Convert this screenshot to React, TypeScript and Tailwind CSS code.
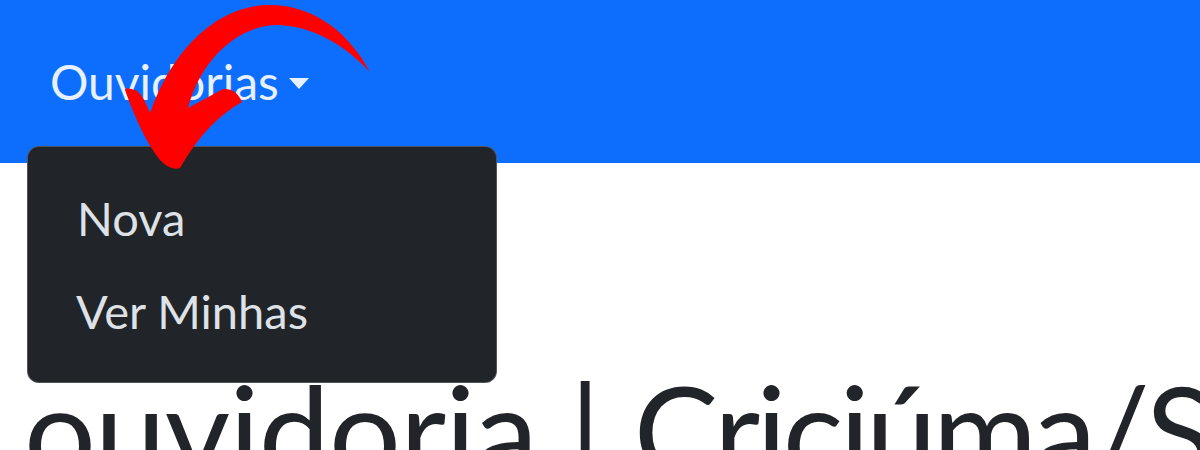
import React from "react";

export default function App() {
  return (
    <div className="relative w-[1200px] h-[450px] overflow-hidden bg-white" style={{ fontFamily: "Lato, 'Open Sans', sans-serif" }}>
      <nav className="h-[163px] bg-[#0d6efd] flex items-start">
        <div className="pl-[50px] pt-[46px] flex items-center gap-[10px]">
          <span className="text-[48px] leading-[72px] text-white/90">Ouvidorias</span>
          <span className="w-0 h-0 border-l-[10px] border-r-[10px] border-t-[11px] border-l-transparent border-r-transparent border-t-white/90 mt-[2px]" />
        </div>
      </nav>
      <h1 className="mt-[190px] pl-[24px] text-[127px] leading-[1.2] text-[#212529] whitespace-nowrap">
        <span className="tracking-[-1px]">ouvidoria</span> | <span className="tracking-[-4px]">Criciúma/SC</span>
      </h1>
      <div className="absolute left-[27px] top-[146px] w-[470px] h-[237px] bg-[#212529] rounded-[12px] border border-[#6c757d]/60 py-[24px] flex flex-col">
        <div className="h-[96px] flex items-center pl-[49px] text-[47px] text-[#dee2e6]">Nova</div>
        <div className="h-[96px] flex items-center pl-[48px] text-[47px] text-[#dee2e6]">Ver Minhas</div>
      </div>
      <svg className="absolute left-0 top-0" width="400" height="200" viewBox="0 0 400 200">
        <path
          fill="#ff0000"
          d="M 370 72 C 345 25, 305 3, 265 5 C 215 8, 172 50, 150 113 Q 143 95 137 91 Q 125 86 125 90 Q 142 138 160 160 Q 170 171 180 168 C 198 136, 220 114, 242 102 Q 236 88 223 89 L 188 108 C 200 62, 235 27, 275 25 C 312 25, 345 45, 370 72 Z"
        />
      </svg>
    </div>
  );
}
